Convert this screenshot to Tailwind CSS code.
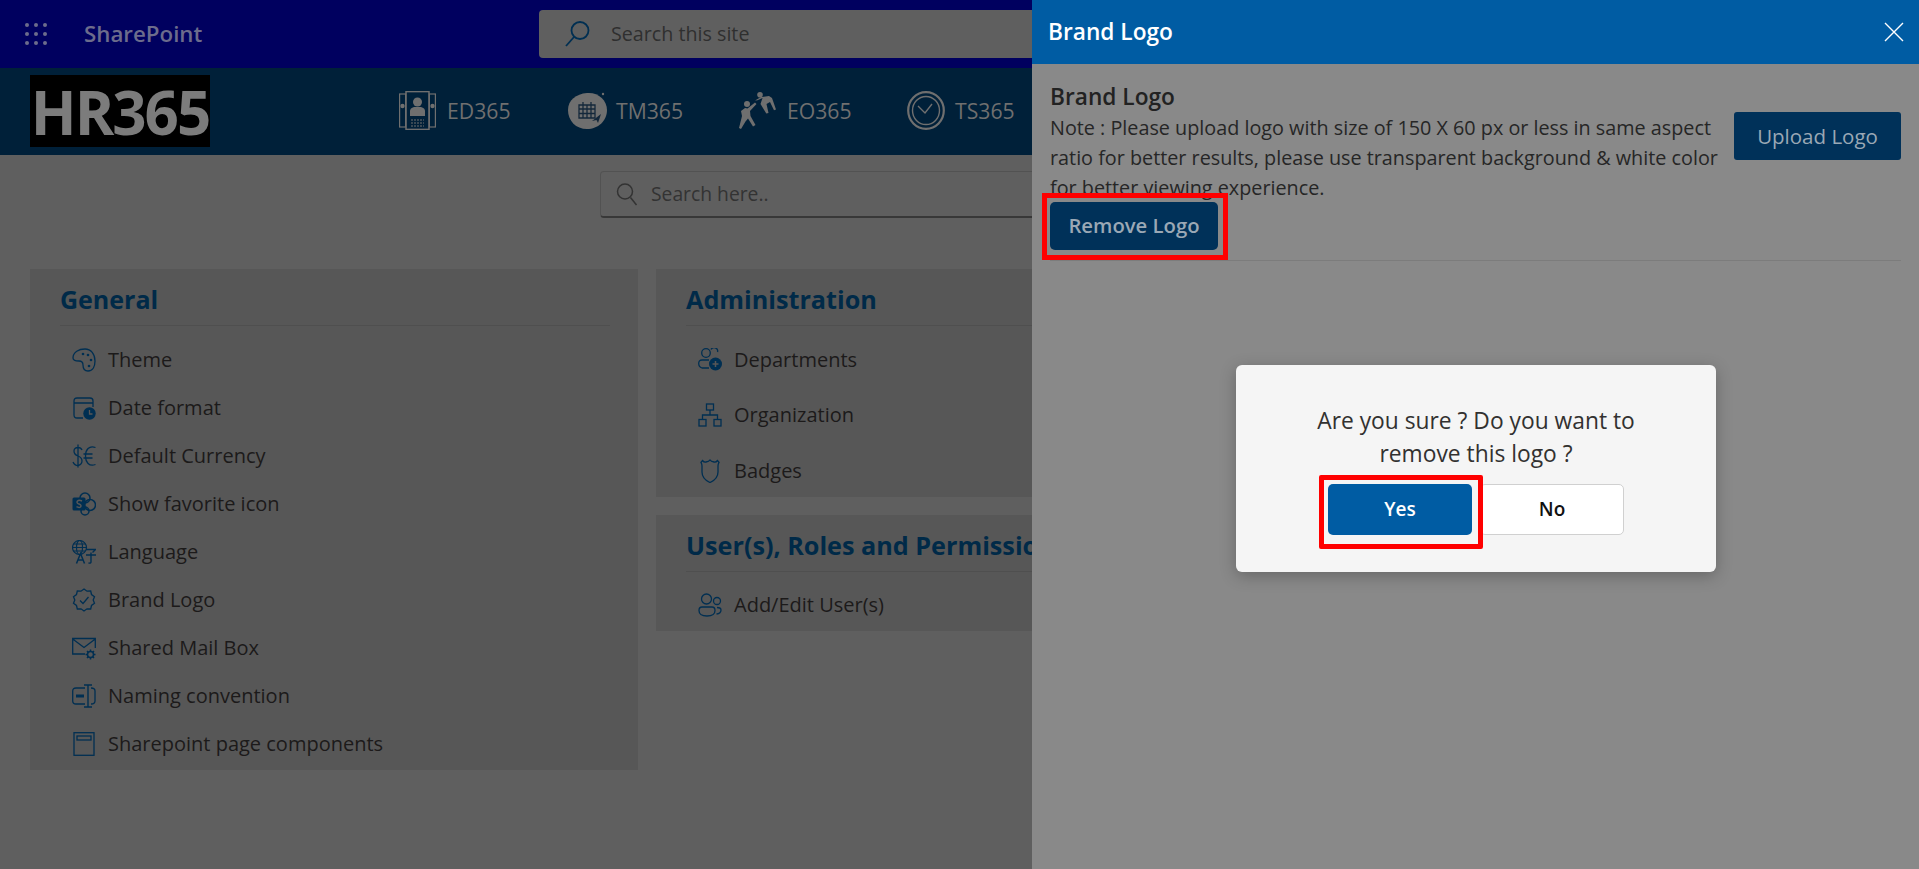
<!DOCTYPE html>
<html lang="en">
<head>
<meta charset="utf-8">
<title>HR365 Settings</title>
<script src="https://cdn.jsdelivr.net/npm/@tailwindcss/browser@4"></script>
</head>
<body class="m-0">
<div class="relative w-[1919px] h-[869px] overflow-hidden bg-[#5f5f5f] font-['Open_Sans',sans-serif] text-[#1c1a1a]">

  <!-- suite bar -->
  <header class="h-[68px] bg-[#00005f] flex items-center">
    <svg class="ml-[24px] w-[24px] h-[24px]" viewBox="0 0 24 24" fill="#6c6c8c"><circle cx="3" cy="3" r="2"/><circle cx="12" cy="3" r="2"/><circle cx="21" cy="3" r="2"/><circle cx="3" cy="12" r="2"/><circle cx="12" cy="12" r="2"/><circle cx="21" cy="12" r="2"/><circle cx="3" cy="21" r="2"/><circle cx="12" cy="21" r="2"/><circle cx="21" cy="21" r="2"/></svg>
    <span class="ml-[36px] w-[455px] text-[22.300px] font-semibold text-[#6c6c8c]">SharePoint</span>
    <div class="h-[48px] w-[700px] rounded-[4px] bg-[#5f5f5f] flex items-center">
      <svg class="ml-[25px] w-[26px] h-[28px]" viewBox="0 0 26 28" fill="none" stroke="#002f52" stroke-width="1.800"><circle cx="16" cy="10.500" r="8.500"/><path d="M10 17 2 26"/></svg>
      <span class="ml-[21px] text-[19.700px] text-[#2f2f2f]">Search this site</span>
    </div>
  </header>

  <!-- app bar -->
  <nav class="h-[87px] pb-[2px] bg-[#002039] flex items-center text-[#6f6f6f] text-[21.200px]">
    <div class="ml-[30px] w-[180px] h-[72px] bg-black flex items-center justify-center pt-[3px] font-bold text-[60px] tracking-[-2px] text-[#7c7c7c]">HR365</div>

    <div class="ml-[189px] flex items-center w-[168px]">
      <svg class="w-[37px] h-[39px]" viewBox="0 0 37 39" fill="none" stroke="#6f6f6f" stroke-width="1.200"><rect x="0.600" y="3" width="6" height="33"/><rect x="30.400" y="3" width="6" height="33"/><rect x="7" y="0.600" width="23" height="37.800" stroke-width="1.500"/><circle cx="18.500" cy="11" r="4.500" fill="#6f6f6f" stroke="none"/><path d="M11 25v-5q0-3 4-4h7q4 1 4 4v5z" fill="#6f6f6f" stroke="none"/><path d="M12 29h13M12 32h13M12 35h13" stroke-dasharray="2 1"/><circle cx="3.500" cy="15" r="2.200" fill="#6f6f6f" stroke="none"/><circle cx="33.500" cy="15" r="2.200" fill="#6f6f6f" stroke="none"/></svg>
      <span class="ml-[11px]">ED365</span>
    </div>
    <div class="flex items-center w-[171px]">
      <svg class="w-[42px] h-[39px]" viewBox="0 0 42 39"><path d="M20 2c11-1 20 7 20 17 0 11-9 19-20 19C9 38 1 30 1 19 1 9 9 3 20 2z" fill="#6f6f6f"/><circle cx="36" cy="3" r="1.200" fill="#6f6f6f"/><path d="M12 14h16v13H12zM12 18h16M16 14v13M20 14v13M24 14v13M12 22.500h16M16 11v4M24 11v4" fill="none" stroke="#14283b" stroke-width="1.300"/><path d="m25 30 9-7-3 9-1.500-3z" fill="#14283b"/></svg>
      <span class="ml-[7px]">TM365</span>
    </div>
    <div class="flex items-center w-[169px]">
      <svg class="w-[39px] h-[37px]" viewBox="0 0 39 37" fill="#6f6f6f"><circle cx="9" cy="12" r="3"/><circle cx="22" cy="2.800" r="2.800"/><path d="M1 36 4 24l-1-5 4-3 2.500.5 7.500-6 1.500 1.500-6.500 7 .5 5 5 9-2.500 1.500-5-8-2.500 3L3 37z"/><path d="m17 8.500 6-3.500 8-1 3 2 4 11.500-2 .8-4-8.300-3.500 2 2 9-2.200.5-5.800-9.500 2-6-5 2.200z"/></svg>
      <span class="ml-[10px]">EO365</span>
    </div>
    <div class="flex items-center">
      <svg class="w-[38px] h-[39px]" viewBox="0 0 38 39" fill="none" stroke="#6f6f6f"><ellipse cx="19" cy="19.500" rx="17.800" ry="18.300" stroke-width="2.200"/><ellipse cx="19" cy="19.500" rx="13.500" ry="14" stroke-width="1.400"/><path d="m11 15 7 7 7-9" stroke-width="1.400"/></svg>
      <span class="ml-[10px]">TS365</span>
    </div>
  </nav>

  <!-- page search -->
  <div class="ml-[600px] mt-[16px] w-[600px] h-[47px] rounded-[4px] border border-[#525252] border-b-[#383838] border-b-2 flex items-center">
    <svg class="ml-[15px] w-[22px] h-[24px]" viewBox="0 0 22 24" fill="none" stroke="#333" stroke-width="1.500"><circle cx="9" cy="9.500" r="7.500"/><path d="m14.500 15.500 6 7.500"/></svg>
    <span class="ml-[13px] pt-[1px] text-[19.300px] text-[#333]">Search here..</span>
  </div>

  <!-- cards -->
  <main class="mt-[51px] pl-[30px] flex gap-[18px] items-start">
    <section class="w-[608px] h-[501px] bg-[#575757] px-[30px]">
      <h2 class="h-[57px] pt-[13px] text-[25px] leading-[34px] font-bold text-[#002a48] border-b border-[#4f4f4f] w-[550px]">General</h2>
      <ul class="pt-[10px] text-[20px] pl-[12px]">
        <li class="h-[48px] flex items-center">
          <svg class="w-[24px] h-[24px] mr-[12px] shrink-0" viewBox="0 0 24 24" fill="none" stroke="#002f52" stroke-width="1.300"><path d="M13 1C7 1 1 4 1 10c0 3 3 3 6 3 3 0 4 1 4 4 0 4 2 6 5 6 5 0 7-5 7-10C23 6 19 1 13 1z"/><g fill="#002f52" stroke="none"><circle cx="11" cy="6" r="1.300"/><circle cx="16" cy="7" r="1.300"/><circle cx="19" cy="12" r="1.300"/><circle cx="17" cy="18" r="1.300"/></g></svg>
          Theme</li>
        <li class="h-[48px] flex items-center">
          <svg class="w-[24px] h-[24px] mr-[12px] shrink-0" viewBox="0 0 24 24" fill="none" stroke="#002f52" stroke-width="1.300"><path d="M11 22H5q-3 0-3-3V5q0-3 3-3h13q3 0 3 3v6M2 7h19"/><circle cx="17.500" cy="17.500" r="6.200" fill="#002f52" stroke="none"/><path d="M17.500 14v4h3" stroke="#575757"/></svg>
          Date format</li>
        <li class="h-[48px] flex items-center">
          <svg class="w-[24px] h-[24px] mr-[12px] shrink-0" viewBox="0 0 24 24" fill="none" stroke="#002f52" stroke-width="1.300"><path d="M10 6Q9 3.500 6 3.500 2 3.500 2 7t4 5 4 5-4 4.500Q2.500 21.500 1 18M6 0.500v23M23.500 3.500C17 1 13.500 6 13.500 12s3.500 11 10 8.500M11.500 10h9M11.500 14h9"/></svg>
          Default Currency</li>
        <li class="h-[48px] flex items-center">
          <svg class="w-[24px] h-[24px] mr-[12px] shrink-0" viewBox="0 0 24 24"><circle cx="13" cy="6" r="5" fill="none" stroke="#002f52" stroke-width="1.500"/><circle cx="18" cy="13" r="5.500" fill="none" stroke="#002f52" stroke-width="1.500"/><circle cx="13" cy="19" r="4" fill="none" stroke="#002f52" stroke-width="1.500"/><rect x="0.500" y="5.500" width="13" height="13" rx="1.500" fill="#002f52"/><path d="M10 9Q7 7.500 5.500 9 4 11 7 12t1.500 3q-1.500 1-4-.300" fill="none" stroke="#575757" stroke-width="1.500"/></svg>
          Show favorite icon</li>
        <li class="h-[48px] flex items-center">
          <svg class="w-[24px] h-[24px] mr-[12px] shrink-0" viewBox="0 0 24 24" fill="none" stroke="#002f52" stroke-width="1.200"><circle cx="7.500" cy="7.500" r="7"/><ellipse cx="7.500" cy="7.500" rx="3" ry="7"/><path d="M.500 7.500h14M1.500 4h12M1.500 11h12"/><path d="m4.500 23.500 4-10 4 10M6 20h5" stroke-width="1.500"/><path d="M14 9.500h9.500l-3 3M14 15h10M19 12.500V22q0 1.500-2.500 1" stroke-width="1.400"/></svg>
          Language</li>
        <li class="h-[48px] flex items-center">
          <svg class="w-[24px] h-[24px] mr-[12px] shrink-0" viewBox="0 0 24 24" fill="none" stroke="#002f52" stroke-width="1.300"><path d="m12 1 3 2.200 3.700-.2.800 3.500 3 2.200L21.200 12l1.300 3.300-3 2.200-.8 3.500-3.700-.2L12 23l-3-2.200-3.700.2-.8-3.500-3-2.200L2.800 12 1.500 8.700l3-2.200.8-3.500 3.700.2z"/><path d="m8 12.500 3 3 5.500-6.500"/></svg>
          Brand Logo</li>
        <li class="h-[48px] flex items-center">
          <svg class="w-[24px] h-[24px] mr-[12px] shrink-0" viewBox="0 0 24 24" fill="none" stroke="#002f52" stroke-width="1.300"><path d="M13 18H.700V2.500h22.600V12M.700 3 12 11.500 23.300 3"/><circle cx="18.500" cy="18.500" r="3" stroke-width="1.500"/><path d="M18.500 13.500v2M18.500 21.500v2M13.500 18.500h2M21.500 18.500h2M15 15l1.400 1.400M20.600 20.600 22 22M15 22l1.400-1.400M20.600 16.400 22 15" stroke-width="1.500"/></svg>
          Shared Mail Box</li>
        <li class="h-[48px] flex items-center">
          <svg class="w-[24px] h-[24px] mr-[12px] shrink-0" viewBox="0 0 24 24" fill="none" stroke="#002f52" stroke-width="1.300"><path d="M13 4H4Q.700 4 .700 7v10q0 3 3.300 3h9M19 4q4 0 4 3v10q0 3-4 3"/><path d="M12 1h8M16 1v22M12 23h8" stroke-width="1.400"/><rect x="4" y="10.500" width="8" height="3" fill="#002f52" stroke="none"/></svg>
          Naming convention</li>
        <li class="h-[48px] flex items-center">
          <svg class="w-[24px] h-[24px] mr-[12px] shrink-0" viewBox="0 0 24 24" fill="none" stroke="#002f52" stroke-width="1.300"><rect x="2" y="0.700" width="20" height="22.600"/><rect x="5" y="4" width="14" height="4"/></svg>
          Sharepoint page components</li>
      </ul>
    </section>

    <div class="w-[600px] flex flex-col gap-[18px]">
      <section class="h-[228px] bg-[#575757] px-[30px]">
        <h2 class="h-[57px] pt-[13px] text-[25.200px] leading-[34px] font-bold text-[#002a48] border-b border-[#4f4f4f] whitespace-nowrap">Administration</h2>
        <ul class="pt-[6px] text-[20px] pl-[12px]">
          <li class="h-[55.500px] flex items-center">
            <svg class="w-[24px] h-[24px] mr-[12px] shrink-0" viewBox="0 0 24 24" fill="none" stroke="#002f52" stroke-width="1.300"><circle cx="8" cy="5" r="4.300"/><path d="M13 1.500a3.500 3.500 0 0 1 6.500 2.500M11 12H4Q.700 12 .700 15.500T4 20h7"/><circle cx="17.500" cy="16" r="6.500" fill="#002f52" stroke="none"/><path d="M17.500 13v6M14.500 16h6" stroke="#575757" stroke-width="1.500"/></svg>
            Departments</li>
          <li class="h-[55.500px] flex items-center">
            <svg class="w-[24px] h-[24px] mr-[12px] shrink-0" viewBox="0 0 24 24" fill="none" stroke="#002f52" stroke-width="1.300"><rect x="8.500" y="1" width="7" height="6"/><rect x="1" y="16.500" width="7" height="6.500"/><rect x="16" y="16.500" width="7" height="6.500"/><path d="M12 7v5M4.500 16.500V12h15v4.500"/></svg>
            Organization</li>
          <li class="h-[55.500px] flex items-center">
            <svg class="w-[24px] h-[24px] mr-[12px] shrink-0" viewBox="0 0 24 24" fill="none" stroke="#002f52" stroke-width="1.300"><path d="M4.500 1.500q1.500 2 3.500 1.500 3-.5 4-2 1 1.500 4 2 2 .5 3.500-1.500l1.500 1.800q-1 1.700-1 3.700v6q0 7-8 10.500-8-3.500-8-10.500V7q0-2-1-3.700z"/></svg>
            Badges</li>
        </ul>
      </section>
      <section class="h-[116px] bg-[#575757] px-[30px]">
        <h2 class="h-[57px] pt-[13px] text-[25.200px] leading-[34px] font-bold text-[#002a48] border-b border-[#4f4f4f] whitespace-nowrap">User(s), Roles and Permissions</h2>
        <ul class="pt-[6px] text-[20px] pl-[12px]">
          <li class="h-[54px] flex items-center">
            <svg class="w-[24px] h-[24px] mr-[12px] shrink-0" viewBox="0 0 24 24" fill="none" stroke="#002f52" stroke-width="1.300"><circle cx="8.500" cy="6" r="5"/><circle cx="19" cy="8" r="3.500"/><path d="M4 14h10q3 0 3 3.500 0 5.500-8 5.500-8 0-8-5.500Q1 14 4 14zM19 14.500q4 0 4 2.500 0 3.500-4.500 4"/></svg>
            Add/Edit User(s)</li>
        </ul>
      </section>
    </div>
  </main>

  <!-- settings panel -->
  <aside class="absolute top-0 right-0 bottom-0 w-[887px] bg-[#898989] flex flex-col">
    <div class="h-[64px] shrink-0 bg-[#005ca3] flex items-center justify-between pl-[16px] pr-[15px] text-white">
      <h1 class="text-[22.700px] font-semibold">Brand Logo</h1>
      <svg class="w-[20px] h-[20px]" viewBox="0 0 20 20" fill="none" stroke="#fff" stroke-width="1.400"><path d="m1 1 18 18M19 1 1 19"/></svg>
    </div>
    <div class="mx-[18px] h-[197px] border-b border-[#7c7c7c] flex items-start">
      <div class="w-[684px] shrink-0 pt-[17px]">
        <div class="text-[22.700px] font-semibold leading-[32px] text-[#222]">Brand Logo</div>
        <p class="text-[19.800px] leading-[30px] text-[#262626] whitespace-nowrap">Note : Please upload logo with size of 150 X 60 px or less in same aspect<br>ratio for better results, please use transparent background &amp; white color<br>for better viewing experience.</p>
        <div class="relative w-[168px] h-[48px] mt-[-1px] bg-[#003159] rounded-[5px] flex items-center justify-center text-[20.300px] font-semibold text-[#9aa8b5]"><span class="mb-[2px]">Remove Logo</span>
          <span class="absolute inset-[-9px_-10px_-10px_-8px] border-[5px] border-[#ff0000]"></span>
        </div>
      </div>
      <div class="w-[168px] h-[48px] mt-[48px] bg-[#003159] rounded-[3px] flex items-center justify-center text-[20.500px] text-[#9aa8b5]">Upload Logo</div>
    </div>
  </aside>

  <!-- confirm dialog -->
  <div class="absolute left-[1236px] top-[365px] w-[480px] h-[207px] bg-[#f5f5f5] rounded-[6px] shadow-[0_4px_16px_rgba(0,0,0,0.25)] flex flex-col items-center">
    <p class="mt-[39px] text-[22.800px] leading-[33px] text-center text-[#323130] w-[360px]">Are you sure ? Do you want to remove this logo ?</p>
    <div class="mt-[14px] flex gap-[8px] w-[296px]">
      <div class="relative w-[144px] h-[51px] bg-[#005ca3] rounded-[5px] flex items-center justify-center text-[19px] font-semibold text-white">Yes
        <span class="absolute inset-[-9px_-11px_-14px_-9px] border-[5px] border-[#ff0000] rounded-[2px]"></span>
      </div>
      <div class="w-[144px] h-[51px] bg-white border border-[#d0d0d0] rounded-[5px] flex items-center justify-center text-[19px] font-semibold text-[#111]">No</div>
    </div>
  </div>
</div>
</body>
</html>
